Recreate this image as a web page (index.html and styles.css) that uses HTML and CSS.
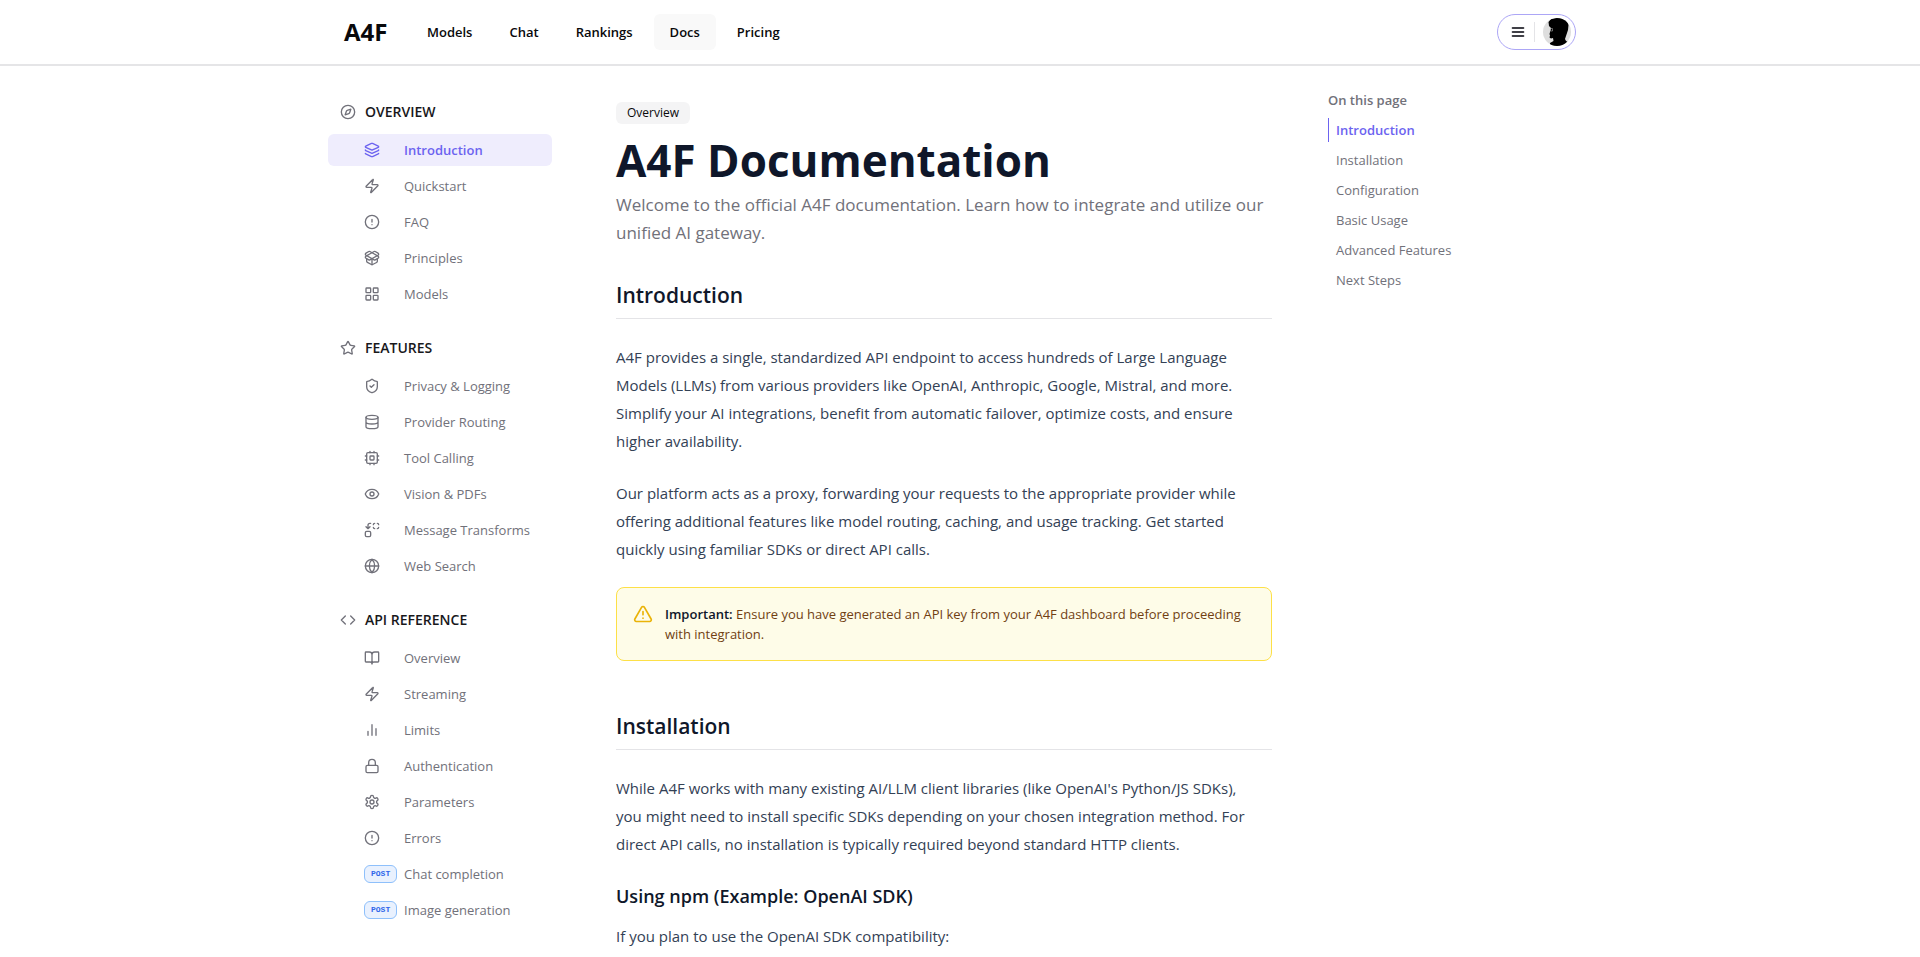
FILE: index.html
```html
<!DOCTYPE html>
<html lang="en">
<head>
<meta charset="utf-8">
<meta name="viewport" content="width=device-width, initial-scale=1">
<title>A4F Documentation</title>
<link rel="stylesheet" href="styles.css">
</head>
<body>
<svg class="sprite" aria-hidden="true">
  <symbol id="compass" viewBox="0 0 24 24"><circle cx="12" cy="12" r="10"/><path d="m16.24 7.76-1.804 5.411a2 2 0 0 1-1.265 1.265L7.76 16.24l1.804-5.411a2 2 0 0 1 1.265-1.265z"/></symbol>
  <symbol id="layers" viewBox="0 0 24 24"><path d="M12.83 2.18a2 2 0 0 0-1.66 0L2.6 6.08a1 1 0 0 0 0 1.83l8.58 3.91a2 2 0 0 0 1.66 0l8.58-3.9a1 1 0 0 0 0-1.83z"/><path d="M2 12a1 1 0 0 0 .58.91l8.6 3.91a2 2 0 0 0 1.65 0l8.58-3.9A1 1 0 0 0 22 12"/><path d="M2 17a1 1 0 0 0 .58.91l8.6 3.91a2 2 0 0 0 1.65 0l8.58-3.9A1 1 0 0 0 22 17"/></symbol>
  <symbol id="zap" viewBox="0 0 24 24"><path d="M4 14a1 1 0 0 1-.78-1.63l9.9-10.2a.5.5 0 0 1 .86.46l-1.92 6.02A1 1 0 0 0 13 10h7a1 1 0 0 1 .78 1.63l-9.9 10.2a.5.5 0 0 1-.86-.46l1.92-6.02A1 1 0 0 0 11 14z"/></symbol>
  <symbol id="alert" viewBox="0 0 24 24"><circle cx="12" cy="12" r="10"/><path d="M12 8v4M12 16h.01"/></symbol>
  <symbol id="package" viewBox="0 0 24 24"><path d="M12 22v-9"/><path d="M15.17 2.21a1.67 1.67 0 0 1 1.63 0L21 4.57a1.93 1.93 0 0 1 0 3.36L8.82 14.79a1.655 1.655 0 0 1-1.64 0L3 12.43a1.93 1.93 0 0 1 0-3.36z"/><path d="M20 13v3.87a2.06 2.06 0 0 1-1.11 1.83l-6 3.08a1.93 1.93 0 0 1-1.78 0l-6-3.08A2.06 2.06 0 0 1 4 16.87V13"/><path d="M21 12.43a1.93 1.93 0 0 0 0-3.36L8.83 2.2a1.64 1.64 0 0 0-1.63 0L3 4.57a1.93 1.93 0 0 0 0 3.36l12.18 6.86a1.636 1.636 0 0 0 1.63 0z"/></symbol>
  <symbol id="grid" viewBox="0 0 24 24"><rect x="3" y="3" width="7" height="7" rx="1"/><rect x="14" y="3" width="7" height="7" rx="1"/><rect x="14" y="14" width="7" height="7" rx="1"/><rect x="3" y="14" width="7" height="7" rx="1"/></symbol>
  <symbol id="star" viewBox="0 0 24 24"><path d="M11.525 2.295a.53.53 0 0 1 .95 0l2.31 4.679a2.123 2.123 0 0 0 1.595 1.16l5.166.756a.53.53 0 0 1 .294.904l-3.736 3.638a2.123 2.123 0 0 0-.611 1.878l.882 5.14a.53.53 0 0 1-.771.56l-4.618-2.428a2.122 2.122 0 0 0-1.973 0L6.396 21.01a.53.53 0 0 1-.77-.56l.881-5.139a2.122 2.122 0 0 0-.611-1.879L2.16 9.795a.53.53 0 0 1 .294-.906l5.165-.755a2.122 2.122 0 0 0 1.597-1.16z"/></symbol>
  <symbol id="shield" viewBox="0 0 24 24"><path d="M20 13c0 5-3.500 7.500-7.660 8.950a1 1 0 0 1-.67-.01C7.500 20.500 4 18 4 13V6a1 1 0 0 1 1-1c2 0 4.500-1.200 6.240-2.720a1.170 1.170 0 0 1 1.520 0C14.510 3.810 17 5 19 5a1 1 0 0 1 1 1z"/><path d="m9 12 2 2 4-4"/></symbol>
  <symbol id="database" viewBox="0 0 24 24"><ellipse cx="12" cy="5" rx="9" ry="3"/><path d="M3 5v14a9 3 0 0 0 18 0V5M3 12a9 3 0 0 0 18 0"/></symbol>
  <symbol id="cpu" viewBox="0 0 24 24"><rect x="4" y="4" width="16" height="16" rx="2"/><rect x="9" y="9" width="6" height="6" rx="1"/><path d="M15 2v2M15 20v2M2 15h2M2 9h2M20 15h2M20 9h2M9 2v2M9 20v2"/></symbol>
  <symbol id="eye" viewBox="0 0 24 24"><path d="M2.062 12.348a1 1 0 0 1 0-.696 10.750 10.750 0 0 1 19.876 0 1 1 0 0 1 0 .696 10.750 10.750 0 0 1-19.876 0"/><circle cx="12" cy="12" r="3"/></symbol>
  <symbol id="replace" viewBox="0 0 24 24"><path d="M14 4a2 2 0 0 1 2-2M16 10a2 2 0 0 1-2-2M20 2a2 2 0 0 1 2 2M22 8a2 2 0 0 1-2 2M3 7l3 3 3-3M6 10V5a3 3 0 0 1 3-3h1"/><rect x="2" y="14" width="8" height="8" rx="2"/></symbol>
  <symbol id="globe" viewBox="0 0 24 24"><circle cx="12" cy="12" r="10"/><path d="M12 2a14.500 14.500 0 0 0 0 20 14.500 14.500 0 0 0 0-20M2 12h20"/></symbol>
  <symbol id="code" viewBox="0 0 24 24"><path d="m16 18 6-6-6-6M8 6l-6 6 6 6"/></symbol>
  <symbol id="book" viewBox="0 0 24 24"><path d="M12 7v14M3 18a1 1 0 0 1-1-1V4a1 1 0 0 1 1-1h5a4 4 0 0 1 4 4 4 4 0 0 1 4-4h5a1 1 0 0 1 1 1v13a1 1 0 0 1-1 1h-6a3 3 0 0 0-3 3 3 3 0 0 0-3-3z"/></symbol>
  <symbol id="bars" viewBox="0 0 24 24"><path d="M18 20V10M12 20V4M6 20v-6"/></symbol>
  <symbol id="lock" viewBox="0 0 24 24"><rect x="3" y="11" width="18" height="11" rx="2"/><path d="M7 11V7a5 5 0 0 1 10 0v4"/></symbol>
  <symbol id="gear" viewBox="0 0 24 24"><path d="M12.22 2h-.44a2 2 0 0 0-2 2v.18a2 2 0 0 1-1 1.730l-.43.25a2 2 0 0 1-2 0l-.15-.08a2 2 0 0 0-2.730.730l-.22.38a2 2 0 0 0 .730 2.730l.15.1a2 2 0 0 1 1 1.720v.51a2 2 0 0 1-1 1.740l-.15.09a2 2 0 0 0-.730 2.730l.22.38a2 2 0 0 0 2.730.730l.15-.08a2 2 0 0 1 2 0l.43.25a2 2 0 0 1 1 1.730V20a2 2 0 0 0 2 2h.44a2 2 0 0 0 2-2v-.18a2 2 0 0 1 1-1.730l.43-.25a2 2 0 0 1 2 0l.15.08a2 2 0 0 0 2.730-.730l.22-.39a2 2 0 0 0-.730-2.730l-.15-.08a2 2 0 0 1-1-1.740v-.5a2 2 0 0 1 1-1.740l.15-.09a2 2 0 0 0 .730-2.730l-.22-.38a2 2 0 0 0-2.730-.730l-.15.08a2 2 0 0 1-2 0l-.43-.25a2 2 0 0 1-1-1.730V4a2 2 0 0 0-2-2z"/><circle cx="12" cy="12" r="3"/></symbol>
  <symbol id="triangle" viewBox="0 0 24 24"><path d="m21.730 18-8-14a2 2 0 0 0-3.480 0l-8 14A2 2 0 0 0 4 21h16a2 2 0 0 0 1.730-3M12 9v4M12 17h.01"/></symbol>
  <symbol id="menu" viewBox="0 0 24 24"><path d="M4 6h16M4 12h16M4 18h16"/></symbol>
</svg>

<header class="site-header">
  <div class="header-inner">
    <a class="logo" href="#">A4F</a>
    <nav class="main-nav" aria-label="Main">
      <a href="#">Models</a>
      <a href="#">Chat</a>
      <a href="#">Rankings</a>
      <a class="current" href="#">Docs</a>
      <a href="#">Pricing</a>
    </nav>
    <button class="account" type="button" aria-label="Account menu">
      <svg class="icon menu-icon"><use href="#menu"/></svg>
      <span class="divider"></span>
      <svg class="avatar" viewBox="0 0 28 28">
        <defs><clipPath id="round"><circle cx="14" cy="14" r="14"/></clipPath></defs>
        <g clip-path="url(#round)"><rect width="28" height="28" fill="#dedede"/><path d="M5.500 4 8 1l5-1h7l4 3 1.500 4-.5 5-2 6-1 3 1 2 3 1.500V28H7v-3l3.500-2-.5-3-2 .5-1.500-1 .5-2-.5-1.500.8-3L8 10 6 8z" fill="#000"/><path d="M7.500 10.500h2v2.500h-2z" fill="none" stroke="#aaa" stroke-width=".6"/></g>
      </svg>
    </button>
  </div>
</header>

<div class="page">
  <nav class="sidebar" aria-label="Documentation">
    <section>
      <h2><svg class="icon"><use href="#compass"/></svg>OVERVIEW</h2>
      <ul>
        <li><a class="current" href="#"><span class="mark"><svg class="icon"><use href="#layers"/></svg></span>Introduction</a></li>
        <li><a href="#"><span class="mark"><svg class="icon"><use href="#zap"/></svg></span>Quickstart</a></li>
        <li><a href="#"><span class="mark"><svg class="icon"><use href="#alert"/></svg></span>FAQ</a></li>
        <li><a href="#"><span class="mark"><svg class="icon"><use href="#package"/></svg></span>Principles</a></li>
        <li><a href="#"><span class="mark"><svg class="icon"><use href="#grid"/></svg></span>Models</a></li>
      </ul>
    </section>
    <section>
      <h2><svg class="icon"><use href="#star"/></svg>FEATURES</h2>
      <ul>
        <li><a href="#"><span class="mark"><svg class="icon"><use href="#shield"/></svg></span>Privacy &amp; Logging</a></li>
        <li><a href="#"><span class="mark"><svg class="icon"><use href="#database"/></svg></span>Provider Routing</a></li>
        <li><a href="#"><span class="mark"><svg class="icon"><use href="#cpu"/></svg></span>Tool Calling</a></li>
        <li><a href="#"><span class="mark"><svg class="icon"><use href="#eye"/></svg></span>Vision &amp; PDFs</a></li>
        <li><a href="#"><span class="mark"><svg class="icon"><use href="#replace"/></svg></span>Message Transforms</a></li>
        <li><a href="#"><span class="mark"><svg class="icon"><use href="#globe"/></svg></span>Web Search</a></li>
      </ul>
    </section>
    <section>
      <h2><svg class="icon"><use href="#code"/></svg>API REFERENCE</h2>
      <ul>
        <li><a href="#"><span class="mark"><svg class="icon"><use href="#book"/></svg></span>Overview</a></li>
        <li><a href="#"><span class="mark"><svg class="icon"><use href="#zap"/></svg></span>Streaming</a></li>
        <li><a href="#"><span class="mark"><svg class="icon"><use href="#bars"/></svg></span>Limits</a></li>
        <li><a href="#"><span class="mark"><svg class="icon"><use href="#lock"/></svg></span>Authentication</a></li>
        <li><a href="#"><span class="mark"><svg class="icon"><use href="#gear"/></svg></span>Parameters</a></li>
        <li><a href="#"><span class="mark"><svg class="icon"><use href="#alert"/></svg></span>Errors</a></li>
        <li><a href="#"><span class="mark"><span class="method">POST</span></span>Chat completion</a></li>
        <li><a href="#"><span class="mark"><span class="method">POST</span></span>Image generation</a></li>
      </ul>
    </section>
  </nav>

  <main class="article">
    <span class="badge">Overview</span>
    <h1>A4F Documentation</h1>
    <p class="lead">Welcome to the official A4F documentation. Learn how to integrate and utilize our unified AI gateway.</p>

    <h2>Introduction</h2>
    <p>A4F provides a single, standardized API endpoint to access hundreds of Large Language Models (LLMs) from various providers like OpenAI, Anthropic, Google, Mistral, and more. Simplify your AI integrations, benefit from automatic failover, optimize costs, and ensure higher availability.</p>
    <p>Our platform acts as a proxy, forwarding your requests to the appropriate provider while offering additional features like model routing, caching, and usage tracking. Get started quickly using familiar SDKs or direct API calls.</p>

    <div class="callout" role="note">
      <svg class="icon"><use href="#triangle"/></svg>
      <div><strong>Important:</strong> Ensure you have generated an API key from your A4F dashboard before proceeding with integration.</div>
    </div>

    <h2>Installation</h2>
    <p>While A4F works with many existing AI/LLM client libraries (like OpenAI's Python/JS SDKs), you might need to install specific SDKs depending on your chosen integration method. For direct API calls, no installation is typically required beyond standard HTTP clients.</p>
    <h3>Using npm (Example: OpenAI SDK)</h3>
    <p>If you plan to use the OpenAI SDK compatibility:</p>
  </main>

  <aside class="toc">
    <h2>On this page</h2>
    <ul>
      <li><a class="current" href="#">Introduction</a></li>
      <li><a href="#">Installation</a></li>
      <li><a href="#">Configuration</a></li>
      <li><a href="#">Basic Usage</a></li>
      <li><a href="#">Advanced Features</a></li>
      <li><a href="#">Next Steps</a></li>
    </ul>
  </aside>
</div>
</body>
</html>
```
FILE: styles.css
```css
* { box-sizing: border-box; }

body {
  margin: 0;
  overflow: hidden;
  height: 100vh;
  background: #fff;
  color: #09090b;
  font: 13px/20px "Segoe UI", "Open Sans", "Noto Sans", sans-serif;
}

a { color: inherit; text-decoration: none; }
ul { list-style: none; margin: 0; padding: 0; }
.sprite { display: none; }

.icon {
  width: 16px;
  height: 16px;
  flex: none;
  fill: none;
  stroke: currentColor;
  stroke-width: 2;
  stroke-linecap: round;
  stroke-linejoin: round;
}

.site-header { border-bottom: 2px solid #e5e5e7; }

.header-inner {
  display: flex;
  align-items: center;
  max-width: 1280px;
  height: 64px;
  margin: 0 auto;
  padding: 0 24px;
}

.logo { width: 67px; font-size: 24px; line-height: 32px; font-weight: 700; }

.main-nav { display: flex; gap: 5px; font-weight: 600; }
.main-nav a { padding: 8px 16px; border-radius: 6px; }
.main-nav .current { background: #f9f9f9; }

.account {
  display: flex;
  align-items: center;
  gap: 8px;
  height: 36px;
  margin-left: auto;
  padding: 0 4px 0 12px;
  border: 1px solid #aca6f6;
  border-radius: 18px;
  background: #fff;
  color: #3f3f46;
}
.menu-icon { stroke-width: 3; }
.divider { width: 1px; height: 20px; background: #e4e4e7; }
.avatar { width: 28px; height: 28px; }

.page {
  display: grid;
  grid-template-columns: 224px minmax(0, 1fr) 264px;
  max-width: 1280px;
  margin: 0 auto;
  padding: 0 8px;
}

.sidebar { padding-top: 28px; color: #71717a; }
.sidebar section { margin-bottom: 20px; }
.sidebar h2 {
  display: flex;
  align-items: center;
  gap: 9px;
  height: 36px;
  margin: 0 0 4px;
  padding-left: 12px;
  color: #18181b;
  font-size: 14px;
  font-weight: 600;
}
.sidebar h2 .icon { color: #71717a; }
.sidebar ul { display: grid; gap: 4px; }
.sidebar a {
  display: flex;
  align-items: center;
  height: 32px;
  padding-left: 36px;
  border-radius: 6px;
}
.mark { display: flex; width: 40px; flex: none; }
.sidebar .current { background: #efedfd; color: #6c63f0; font-weight: 600; }

.method {
  padding: 0 6px;
  border: 1px solid #8ec0fb;
  border-radius: 6px;
  background: #e9f1fe;
  color: #2f66ea;
  font: 700 8px/16px "Liberation Mono", monospace;
}

.article { padding: 36px 56px 0 64px; }
.badge {
  display: block;
  width: fit-content;
  padding: 1px 11px;
  border-radius: 6px;
  background: #f4f4f5;
  font-size: 12px;
  font-weight: 500;
}
.article h1 {
  margin: 12px 0 7px;
  color: #0f172a;
  font-size: 44px;
  line-height: 48px;
  font-weight: 700;
}
.article p { margin: 0 0 24px; padding-right: 8px; color: #334155; font-size: 15px; line-height: 28px; }
.article .lead { margin-bottom: 32px; padding-right: 0; color: #71717a; font-size: 17px; }
.article h2 {
  margin: 0 0 24px;
  padding-bottom: 7px;
  border-bottom: 1px solid #e4e4e7;
  color: #0f172a;
  font-size: 21px;
  line-height: 32px;
  font-weight: 600;
}
.article h3 {
  margin: 0 0 12px;
  color: #0f172a;
  font-size: 18px;
  line-height: 28px;
  font-weight: 600;
}
.callout {
  display: flex;
  gap: 12px;
  margin-bottom: 49px;
  padding: 16px;
  border: 1px solid #fde047;
  border-radius: 8px;
  background: #fefce8;
  color: #713f12;
}
.callout strong { color: #0f172a; font-weight: 600; }
.callout .icon { width: 20px; height: 20px; color: #eab308; }

.toc { padding-top: 24px; color: #71717a; }
.toc h2 { margin: 0 0 8px; font-size: 13px; font-weight: 600; }
.toc ul { display: grid; gap: 6px; }
.toc a { display: block; padding: 2px 0 2px 7px; border-left: 1px solid transparent; }
.toc .current { border-color: #6c63f0; color: #6c63f0; font-weight: 600; }
```
